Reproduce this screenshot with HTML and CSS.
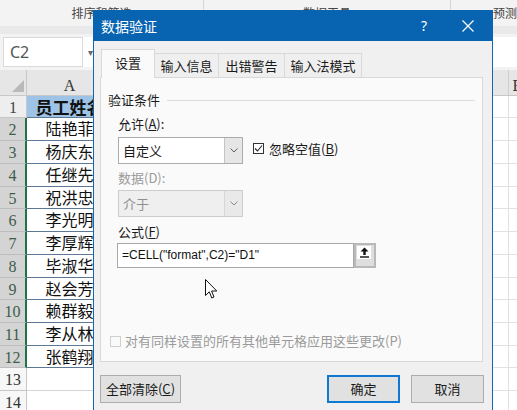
FILE: index.html
```html
<!DOCTYPE html>
<html>
<head>
<meta charset="utf-8">
<link rel="stylesheet" href="styles.css">
</head>
<body>
<div class="excel">
  <div class="ribbon">
    <div class="rgroup g1"><span>排序和筛选</span></div>
    <div class="rgroup g2"><span>数据工具</span></div>
    <div class="rgroup g3"><span>预测</span></div>
  </div>
  <div class="strip"></div>
  <div class="fbar">
    <div class="namebox">C2</div>
    <div class="nbarrow">▾</div>
    <div class="finput"></div>
  </div>
  <div class="sheet">
    <div class="hrow">
      <div class="corner"><svg width="12" height="12" viewBox="0 0 12 12"><polygon points="12,0 12,12 0,12" fill="#b9b9b9"/></svg></div>
      <div class="ch ca">A</div><div class="ch cb">B</div><div class="ch cc">C</div><div class="ch cd">D</div><div class="ch ce">E</div>
    </div>
    <div class="row first"><div class="rh">1</div><div class="c ca head">员工姓名</div><div class="c cb"></div><div class="c cc"></div><div class="c cd"></div><div class="c ce"></div></div>
    <div class="row sel h23"><div class="rh">2</div><div class="c ca">陆艳菲</div><div class="c cb"></div><div class="c cc"></div><div class="c cd"></div><div class="c ce"></div></div>
    <div class="row sel h23"><div class="rh">3</div><div class="c ca">杨庆东</div><div class="c cb"></div><div class="c cc"></div><div class="c cd"></div><div class="c ce"></div></div>
    <div class="row sel h23"><div class="rh">4</div><div class="c ca">任继先</div><div class="c cb"></div><div class="c cc"></div><div class="c cd"></div><div class="c ce"></div></div>
    <div class="row sel h22"><div class="rh">5</div><div class="c ca">祝洪忠</div><div class="c cb"></div><div class="c cc"></div><div class="c cd"></div><div class="c ce"></div></div>
    <div class="row sel h23"><div class="rh">6</div><div class="c ca">李光明</div><div class="c cb"></div><div class="c cc"></div><div class="c cd"></div><div class="c ce"></div></div>
    <div class="row sel h23"><div class="rh">7</div><div class="c ca">李厚辉</div><div class="c cb"></div><div class="c cc"></div><div class="c cd"></div><div class="c ce"></div></div>
    <div class="row sel h23"><div class="rh">8</div><div class="c ca">毕淑华</div><div class="c cb"></div><div class="c cc"></div><div class="c cd"></div><div class="c ce"></div></div>
    <div class="row sel h22"><div class="rh">9</div><div class="c ca">赵会芳</div><div class="c cb"></div><div class="c cc"></div><div class="c cd"></div><div class="c ce"></div></div>
    <div class="row sel h23"><div class="rh">10</div><div class="c ca">赖群毅</div><div class="c cb"></div><div class="c cc"></div><div class="c cd"></div><div class="c ce"></div></div>
    <div class="row sel h23"><div class="rh">11</div><div class="c ca">李从林</div><div class="c cb"></div><div class="c cc"></div><div class="c cd"></div><div class="c ce"></div></div>
    <div class="row sel h22"><div class="rh">12</div><div class="c ca">张鹤翔</div><div class="c cb"></div><div class="c cc"></div><div class="c cd"></div><div class="c ce"></div></div>
    <div class="row plain h23"><div class="rh">13</div><div class="c ca"></div><div class="c cb"></div><div class="c cc"></div><div class="c cd"></div><div class="c ce"></div></div>
    <div class="row plain h23"><div class="rh">14</div><div class="c ca"></div><div class="c cb"></div><div class="c cc"></div><div class="c cd"></div><div class="c ce"></div></div>
  </div>
</div>

<div class="dialog">
  <div class="titlebar">
    <span class="title">数据验证</span>
    <span class="help">?</span>
    <span class="close"><svg width="12" height="12" viewBox="0 0 12 12"><path d="M0.5 0.5 L11.5 11.5 M11.5 0.5 L0.5 11.5" stroke="#fff" stroke-width="1.2" fill="none"/></svg></span>
  </div>
  <div class="dbody">
    <div class="tabs">
      <div class="tab active">设置</div>
      <div class="tab w64">输入信息</div>
      <div class="tab w66">出错警告</div>
      <div class="tab w77">输入法模式</div>
    </div>
    <div class="panel">
      <div class="group"><span>验证条件</span><i class="rule"></i></div>
      <div class="inner">
        <div class="label">允许(<u>A</u>):</div>
        <div class="line">
          <div class="select"><span class="val">自定义</span><span class="arrow"><svg width="8" height="5" viewBox="0 0 8 5"><path d="M0.5 0.5 L4 4 L7.5 0.5" stroke="#606060" fill="none"/></svg></span></div>
          <div class="chk"><span class="box"><svg width="9" height="9" viewBox="0 0 9 9"><path d="M1 4.5 L3.5 7 L8 1.5" stroke="#222" stroke-width="1.1" fill="none"/></svg></span><span>忽略空值(<u>B</u>)</span></div>
        </div>
        <div class="label dis">数据(D):</div>
        <div class="select disabled"><span class="val">介于</span><span class="arrow"><svg width="8" height="5" viewBox="0 0 8 5"><path d="M0.5 0.5 L4 4 L7.5 0.5" stroke="#8a8a8a" fill="none"/></svg></span></div>
        <div class="label">公式(<u>F</u>)</div>
        <div class="formula">
          <div class="fin">=CELL("format",C2)="D1"</div>
          <div class="fbtn"><span class="fbi"><svg width="11" height="11" viewBox="0 0 11 11"><path d="M5.5 0.5 L1.5 4.5 L4.3 4.5 L4.3 8 L6.7 8 L6.7 4.5 L9.5 4.5 Z" fill="#111"/><rect x="1" y="9.3" width="9" height="1.4" fill="#111"/></svg></span></div>
        </div>
      </div>
      <div class="applyall"><span class="box dbox"></span><span>对有同样设置的所有其他单元格应用这些更改(P)</span></div>
    </div>
    <div class="buttons">
      <div class="btn clear">全部清除(<u>C</u>)</div>
      <div class="spacer"></div>
      <div class="btn ok">确定</div>
      <div class="btn cancel">取消</div>
    </div>
  </div>
</div>

<svg class="cursor" width="13" height="21" viewBox="0 0 13 21"><path d="M0.5 0.5 L0.5 16.5 L4.3 12.8 L6.8 19 L9 18 L6.6 12 L11.8 12 Z" fill="#fff" stroke="#111" stroke-width="1"/></svg>
</body>
</html>
```

FILE: styles.css
```css
html, body {
  margin: 0;
  padding: 0;
}
body {
  width: 517px;
  height: 410px;
  overflow: hidden;
  position: relative;
  background: #ffffff;
  font-family: "Noto Sans CJK SC", "Noto Sans", sans-serif;
}

/* ---------- Excel background ---------- */
.ribbon {
  height: 26px;
  background: #f3f3f3;
  display: flex;
  font-size: 12px;
  color: #444;
  line-height: 16px;
  white-space: nowrap;
}
.rgroup {
  display: flex;
  justify-content: center;
  padding-top: 5px;
  box-sizing: border-box;
}
.g1 { width: 206px; border-right: 1px solid #d6d6d6; }
.g2 { width: 249px; border-right: 1px solid #d6d6d6; }
.g3 { flex: 1; justify-content: flex-start; padding-left: 42px; }

.strip {
  height: 8px;
  background: #e9e9e9;
}
.fbar {
  height: 36px;
  background: #f3f3f3;
  display: flex;
  align-items: center;
  padding-left: 3px;
  box-sizing: border-box;
}
.namebox {
  width: 80px;
  height: 30px;
  background: #fff;
  border: 1px solid #dadada;
  box-sizing: border-box;
  font-family: "Noto Sans", sans-serif;
  font-size: 16px;
  color: #555;
  line-height: 28px;
  padding-left: 6px;
}
.nbarrow {
  width: 14px;
  height: 30px;
  background: #fff;
  color: #666;
  font-size: 10px;
  line-height: 30px;
  text-align: center;
}
.finput {
  flex: 1;
  height: 30px;
  margin-left: 8px;
  background: #fff;
}

.sheet {
  display: flex;
  flex-direction: column;
}
.hrow {
  display: flex;
  flex: none;
  height: 26px;
  background: #e6e6e6;
  border-bottom: 1px solid #c8c8c8;
  box-sizing: border-box;
}
.corner {
  width: 27px;
  flex: none;
  display: flex;
  align-items: flex-end;
  justify-content: flex-end;
  padding: 0 2px 3px 0;
  box-sizing: border-box;
  border-right: 1px solid #c8c8c8;
}
.ch {
  flex: none;
  font-family: "Liberation Serif", serif;
  font-size: 16px;
  color: #333;
  text-align: center;
  line-height: 32px;
  border-right: 1px solid #cfcfcf;
  box-sizing: border-box;
}
.ca { width: 86px; }
.cb, .cc { width: 130px; }
.cd { width: 136px; }
.ce { width: 18px; }

.row {
  display: flex;
  flex: none;
  height: 23px;
  box-sizing: border-box;
}
.row.first { height: 22px; }
.row.h23 { height: 23px; }
.row.h22 { height: 22px; }
.rh {
  width: 27px;
  flex: none;
  box-sizing: border-box;
  font-family: "Liberation Serif", serif;
  font-size: 16px;
  color: #444;
  text-align: center;
  line-height: 22px;
  background: #eeeeee;
  border-right: 1px solid #c8c8c8;
  border-bottom: 1px solid #c6c6c6;
  padding-top: 1px;
}
.row.sel .rh {
  background: #d4d4d4;
  color: #3d5c4a;
  border-right: 2px solid #217346;
  border-bottom: 1px solid #bdbdbd;
}
.row.plain .rh {
  background: #f7f7f7;
  color: #333;
}
.c {
  flex: none;
  box-sizing: border-box;
  border-right: 1px solid #e1e1e1;
  border-bottom: 1px solid #e1e1e1;
}
.c.ca {
  font-size: 16px;
  line-height: 21px;
  text-align: center;
  color: #111;
  border-bottom: 1px solid #5d7895;
  white-space: nowrap;
  overflow: hidden;
}
.row.plain .c.ca { border-bottom: 1px solid #d6d6d6; }
.c.head {
  background: #9dc3e6;
  font-weight: 700;
  font-size: 17px;
}

/* ---------- Dialog ---------- */
.dialog {
  position: absolute;
  left: 93px;
  top: 10px;
  width: 400px;
  height: 406px;
  box-sizing: border-box;
  border: 1px solid #1466b0;
  border-top: none;
  background: #f0f0f0;
  font-size: 13px;
  color: #1a1a1a;
}
.titlebar {
  height: 31px;
  margin: 0 -1px;
  background: #0864b1;
  display: flex;
  align-items: center;
  color: #fff;
}
.title {
  padding-left: 8px;
  font-size: 14px;
  line-height: 20px;
}
.help {
  margin-left: auto;
  width: 20px;
  text-align: center;
  font-family: "Noto Sans", sans-serif;
  font-size: 14px;
}
.close {
  width: 30px;
  margin-left: 19px;
  margin-right: 10px;
  display: flex;
  justify-content: center;
}
.dbody {
  padding-top: 8px;
}
.tabs {
  display: flex;
  align-items: flex-end;
  height: 28px;
  margin-left: 7px;
}
.tab {
  height: 24px;
  box-sizing: border-box;
  border: 1px solid #d9d9d9;
  border-bottom: none;
  background: #efefef;
  margin-left: -1px;
  display: flex;
  align-items: center;
  justify-content: center;
  line-height: 18px;
}
.tab.active {
  width: 54px;
  height: 29px;
  margin-left: 0;
  margin-bottom: -1px;
  background: #fafafa;
  position: relative;
  z-index: 1;
  padding-bottom: 2px;
}
.w64 { width: 65px; }
.w66 { width: 67px; }
.w77 { width: 78px; }

.panel {
  margin-left: 6px;
  width: 383px;
  height: 285px;
  box-sizing: border-box;
  border: 1px solid #d9d9d9;
  background: #fafafa;
  display: flex;
  flex-direction: column;
}
.group {
  display: flex;
  align-items: center;
  padding: 13px 7px 0 7px;
  line-height: 18px;
}
.rule {
  flex: 1;
  height: 1px;
  background: #dcdcdc;
  margin-left: 7px;
}
.inner {
  padding-left: 17px;
}
.label {
  margin-top: 6px;
  line-height: 18px;
}
.label.dis {
  margin-top: 5px;
  color: #9a9a9a;
}
.line {
  display: flex;
  align-items: flex-start;
  margin-top: 4px;
}
.select {
  width: 125px;
  height: 27px;
  box-sizing: border-box;
  border: 1px solid #acacac;
  background: #fff;
  display: flex;
}
.select .val {
  flex: 1;
  padding-left: 4px;
  line-height: 25px;
}
.select .arrow {
  width: 17px;
  background: #e6e6e6;
  border-left: 1px solid #c4c4c4;
  display: flex;
  align-items: center;
  justify-content: center;
}
.select.disabled {
  margin-top: 3px;
  border-color: #cccccc;
  background: #efefef;
  color: #8f8f8f;
}
.select.disabled .arrow {
  background: #e9e9e9;
  border-left-color: #d6d6d6;
}
.chk {
  display: flex;
  align-items: center;
  margin-left: 10px;
  margin-top: 1px;
  height: 20px;
}
.box {
  width: 11px;
  height: 11px;
  box-sizing: border-box;
  border: 1px solid #333;
  background: #fff;
  margin-right: 5px;
  display: flex;
  align-items: center;
  justify-content: center;
}
.box svg { display: block; }
.formula {
  display: flex;
  margin-top: 2px;
  margin-left: -1px;
}
.fin {
  width: 237px;
  height: 25px;
  box-sizing: border-box;
  border: 1px solid #a8a8a8;
  background: #fff;
  padding-left: 4px;
  font-family: "Liberation Sans", Arial, sans-serif;
  font-size: 12px;
  line-height: 23px;
  color: #111;
}
.fbtn {
  width: 22px;
  height: 25px;
  box-sizing: border-box;
  border: 2px solid #b9b9b9;
  background: #dedede;
  padding: 1px 0 0 1px;
}
.fbi {
  display: flex;
  width: 14px;
  height: 13px;
  background: #fff;
  align-items: center;
  justify-content: center;
}
.applyall {
  margin-top: auto;
  padding: 0 0 11px 9px;
  display: flex;
  align-items: center;
  line-height: 18px;
  color: #9a9a9a;
}
.dbox {
  border-color: #cfcfcf;
  background: #fafafa;
  margin-right: 4px;
}
.buttons {
  display: flex;
  margin-top: 13px;
  padding: 0 8px 0 6px;
}
.btn {
  height: 28px;
  box-sizing: border-box;
  border: 1px solid #adadad;
  background: #e1e1e1;
  display: flex;
  align-items: center;
  justify-content: center;
  line-height: 18px;
}
.btn.clear { width: 81px; }
.spacer { flex: 1; }
.btn.ok {
  width: 73px;
  border: 2px solid #0f78d2;
}
.btn.cancel {
  width: 73px;
  margin-left: 11px;
}

.cursor {
  position: absolute;
  left: 205px;
  top: 279px;
}
```
